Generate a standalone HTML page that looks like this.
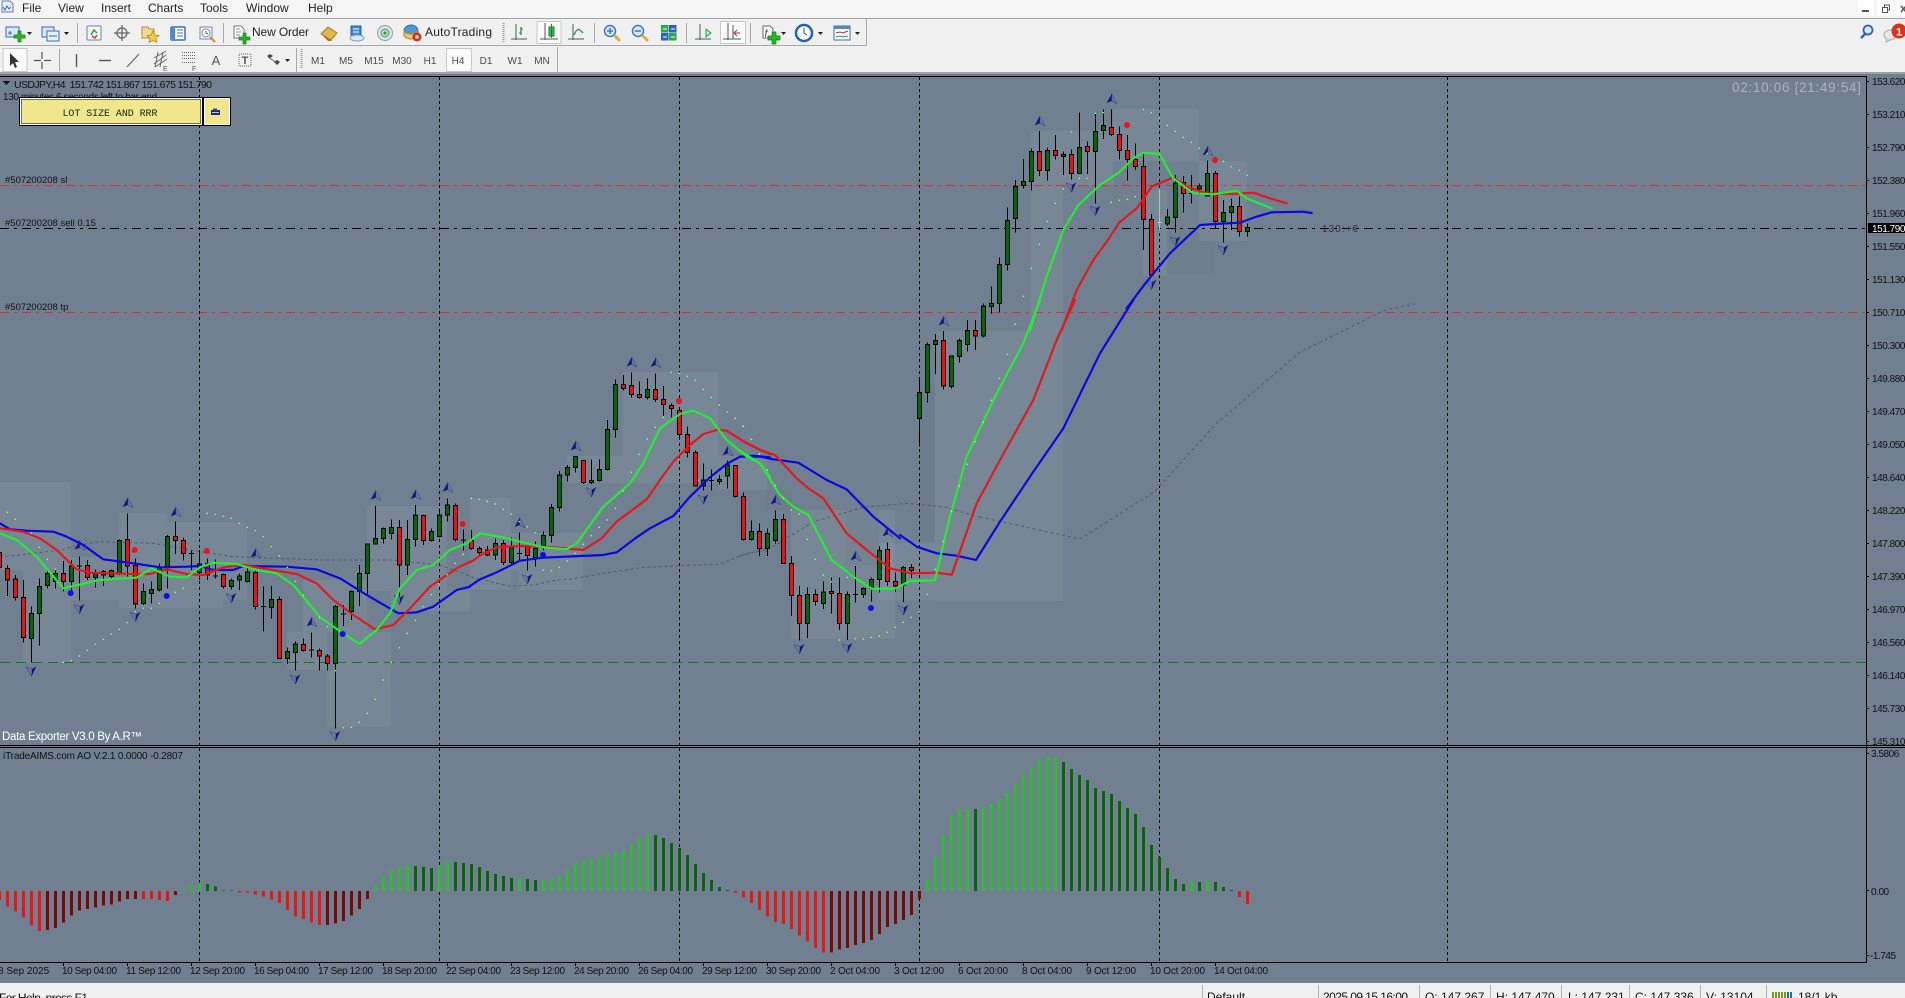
<!DOCTYPE html>
<html><head><meta charset="utf-8"><title>USDJPY,H4</title>
<style>
html,body{margin:0;padding:0;background:#708090;width:1905px;height:998px;overflow:hidden}
svg{display:block;font-family:"Liberation Sans",sans-serif}
.w{fill:none;stroke:#000;stroke-width:3}
.r{fill:#ee1111;stroke:#000;stroke-width:3}
.g{fill:#0a640a;stroke:#000;stroke-width:3}
.lb{fill:none;stroke:#0808e0;stroke-width:6.5;stroke-linejoin:round;stroke-linecap:round}
.lr{fill:none;stroke:#e4181c;stroke-width:6.5;stroke-linejoin:round;stroke-linecap:round}
.ll{fill:none;stroke:#22ee33;stroke-width:6.5;stroke-linejoin:round;stroke-linecap:round}
.ld{fill:none;stroke:#56586e;stroke-width:3;stroke-dasharray:9 8}
.dot{fill:none;stroke:#86ff86;stroke-width:5;stroke-linecap:round}
.tx{font-size:10px;fill:#111}
.px{letter-spacing:-.45px}
.tb{font-size:10px;fill:#4a4a4a;text-anchor:middle}
.mn{font-size:12px;fill:#222}
.st{font-size:12px;fill:#111}
.sep{fill:#a8a8a8}
.vd{stroke:#000;stroke-width:1;stroke-dasharray:3 3}
</style></head><body>
<svg width="1905" height="998" viewBox="0 0 1905 998" xmlns="http://www.w3.org/2000/svg">
<defs>
<g id="u"><path d="M1-17L-14 11 2 5z" fill="#14177e"/><path d="M1-17L17 13 2 5z" fill="#6d7ea0" stroke="#2a3580" stroke-width="1.5"/></g>
<g id="d"><path d="M1 17L-16-11 2-5z" fill="#6d7ea0" stroke="#2a3580" stroke-width="1.5"/><path d="M1 17L15-13 2-5z" fill="#14177e"/></g>
</defs>

<!-- top chrome -->
<rect width="1905" height="18" fill="#f5f5f5"/>
<rect y="18" width="1905" height="1" fill="#a4a4a4"/>
<rect y="19" width="1905" height="55" fill="#f0f0f0"/>
<rect y="45" width="867" height="1" fill="#a8a8a8"/>
<rect x="866" y="19" width="1" height="27" fill="#a8a8a8"/>
<rect y="72" width="1905" height="2" fill="#a0a0a0"/>

<!-- menu -->
<path d="M2 1h8l3 3v8H2z" fill="#e8eef8" stroke="#5a7fb0"/><path d="M3 7l2 3 2-4 2 3 2-2" fill="none" stroke="#3a6aa0"/>
<text class="mn" x="22" y="12">File</text><text class="mn" x="58" y="12">View</text><text class="mn" x="101" y="12">Insert</text><text class="mn" x="148" y="12">Charts</text><text class="mn" x="200" y="12">Tools</text><text class="mn" x="246" y="12">Window</text><text class="mn" x="308" y="12">Help</text>

<!-- window buttons -->
<rect x="1858" y="0" width="16" height="16" fill="#fff"/><rect x="1877" y="0" width="16" height="16" fill="#fff"/><rect x="1896" y="0" width="9" height="16" fill="#fff"/>
<rect x="1862" y="10" width="7" height="2" fill="#555"/>
<path d="M1882.500 7.500h5v5h-5zM1884.500 7.500v-2.500h5v5h-2" fill="none" stroke="#555"/>
<path d="M1901 6l5 6M1906 6l-5 6" stroke="#555" stroke-width="1.5"/>

<!-- right tools -->
<circle cx="1868" cy="30" r="4.500" fill="#dbe8fa" stroke="#2a62c0" stroke-width="1.800"/><path d="M1865 34l-4 4" stroke="#2a62c0" stroke-width="2.500"/>
<ellipse cx="1890" cy="35" rx="6" ry="5" fill="#e8e8e8" stroke="#aaa"/><path d="M1887 39l-1 3 4-2" fill="#e8e8e8" stroke="#aaa"/>
<circle cx="1899" cy="31" r="7.500" fill="#dd3018"/><text x="1899" y="35.500" text-anchor="middle" font-size="11" font-weight="bold" fill="#fff">1</text>

<!-- toolbar 1 icons -->
<rect x="6" y="27" width="13" height="10" fill="#d8e8f8" stroke="#3a6ea8"/><path d="M8 33h4M10 31v4" stroke="#3a6ea8"/>
<path d="M14 35h4v-4h3v4h4v3h-4v4h-3v-4h-4z" fill="#22b822" stroke="#1a7a1a" stroke-width=".7"/>
<path d="M27 32h5l-2.500 3z" fill="#222"/>
<rect x="42" y="27" width="12" height="10" fill="#d8e8f8" stroke="#3a6ea8"/><rect x="47" y="31" width="12" height="10" fill="#e8f0fa" stroke="#3a6ea8"/><path d="M49 36h8" stroke="#3a6ea8"/>
<path d="M64 32h5l-2.500 3z" fill="#222"/>
<rect x="77" y="23" width="1" height="20" class="sep"/>
<rect x="87" y="26" width="14" height="14" rx="1" fill="#f8f8f8" stroke="#5a84b8"/><path d="M91 35l3-5 3 3" fill="none" stroke="#2aa82a" stroke-width="1.500"/><path d="M92 36l3 2 2-3" fill="none" stroke="#d03020" stroke-width="1.500"/>
<circle cx="122" cy="33" r="5" fill="none" stroke="#666" stroke-width="1.300"/><path d="M122 25v16M114 33h16" stroke="#666" stroke-width="1.300"/>
<path d="M142 27h6l1 2h5v9h-12z" fill="#f4d98a" stroke="#b09040"/><path d="M153 31l2 4 4 .5-3 3 1 4-4-2-4 2 1-4-3-3 4-.5z" fill="#f4c840" stroke="#a88020" stroke-width=".7"/>
<rect x="171" y="27" width="14" height="13" rx="1" fill="#fff" stroke="#3a70b8" stroke-width="1.500"/><rect x="171" y="27" width="4" height="13" fill="#4a88d8"/><path d="M177 30h6M177 33h6M177 36h6" stroke="#5a6a80"/>
<rect x="200" y="27" width="12" height="12" fill="#eef2f8" stroke="#7a8ca8"/><circle cx="206" cy="33" r="4" fill="#fff" stroke="#7a8ca8"/><path d="M206 31v2l2 1" stroke="#555" fill="none"/><path d="M210 37l5 5" stroke="#c09030" stroke-width="2"/>
<rect x="223" y="23" width="1" height="20" class="sep"/>
<path d="M234 26h7l3 3v9h-10z" fill="#fff" stroke="#777"/><path d="M236 29h4M236 32h5M236 35h4" stroke="#888"/>
<path d="M239 37h4v-4h3v4h4v3h-4v4h-3v-4h-4z" fill="#22b822" stroke="#1a7a1a" stroke-width=".7"/>
<text class="mn" x="252" y="36" textLength="57">New Order</text>
<path d="M321 34l7-7 9 6-6 7z" fill="#e0b84c" stroke="#a07820"/><path d="M321 34l10 6 1 1-4 0z" fill="#a8741c"/>
<path d="M351 26h10v9h-10z" fill="#3a88d8" stroke="#2a60a8"/><path d="M353 29h6M353 32h6" stroke="#fff"/><ellipse cx="357" cy="38" rx="7" ry="3" fill="#dbe8f4" stroke="#88a0b8"/>
<circle cx="385" cy="33" r="7.500" fill="#d8e4ec" stroke="#8aa0b0"/><circle cx="385" cy="33" r="4" fill="#bdd8c0" stroke="#5aa060"/><circle cx="385" cy="33" r="1.500" fill="#2a9a3a"/>
<ellipse cx="411" cy="31" rx="7" ry="6" fill="#4a98d8" stroke="#2a70a8"/><path d="M404 31c3 4 10 4 14 0l1 5c-4 4-11 4-15 0z" fill="#e8c860" stroke="#a88830"/><circle cx="417" cy="37" r="4.500" fill="#d83018"/><rect x="415.500" y="35.500" width="3" height="3" fill="#fff"/>
<text class="mn" x="425" y="36" textLength="67">AutoTrading</text>
<path d="M503.500 23v20" stroke="#999" stroke-width="2" stroke-dasharray="1 1"/>
<g fill="none" stroke="#4a5a5a">
<path d="M516 24v16M511 39h16"/><path d="M521 27v8" stroke="#2a8a2a" stroke-width="1.300"/><path d="M519 33h2M521 29h2" stroke="#2a8a2a"/>
<rect x="537" y="21.500" width="24" height="22" fill="#fafafa" stroke="#c8c8c8"/>
<path d="M545 23v17M540 39h18"/><rect x="549" y="27" width="5" height="9" fill="#32c040" stroke="#2a7a3a"/><path d="M551.500 24v14" stroke="#2a7a3a"/>
<path d="M573 24v16M568 39h16"/><path d="M574 35c3-7 5-7 9-2" stroke="#2a8a4a" stroke-width="1.300"/>
</g>
<rect x="594" y="23" width="1" height="20" class="sep"/>
<g fill="#dbeafa" stroke="#3a78c8" stroke-width="1.500"><circle cx="610" cy="31" r="5.500"/><circle cx="638" cy="31" r="5.500"/></g>
<path d="M607 31h6M610 28v6M635 31h6" stroke="#3a78c8" stroke-width="1.500"/>
<path d="M614 35l6 6M642 35l6 6" stroke="#d8b040" stroke-width="3"/>
<rect x="661" y="25" width="7.500" height="7.500" fill="#2aa84a"/><rect x="669" y="25" width="7.500" height="7.500" fill="#2a60c0"/><rect x="661" y="33" width="7.500" height="7.500" fill="#2a60c0"/><rect x="669" y="33" width="7.500" height="7.500" fill="#2aa84a"/><path d="M663 29h4M671 29h4M663 37h4M671 37h4" stroke="#fff"/>
<rect x="686" y="23" width="1" height="20" class="sep"/>
<g fill="none" stroke="#4a5a5a"><path d="M700 24v16M695 39h16"/><path d="M706 29l5 4-5 4z" stroke="#2a9a3a" fill="#b8ecb8"/>
<rect x="720.500" y="21.500" width="25" height="22" fill="#fafafa" stroke="#c8c8c8"/>
<path d="M728 23v17M723 39h18M733 25v14"/><path d="M734 33h6M737 30l-3 3 3 3" stroke="#c03020"/></g>
<rect x="750" y="23" width="1" height="20" class="sep"/>
<path d="M763 26h7l3 3v9h-10z" fill="#fff" stroke="#666"/><text x="764.500" y="37" font-size="10" font-style="italic" fill="#333">f</text>
<path d="M768 36h4v-4h4v4h4v4h-4v4h-4v-4h-4z" fill="#22b822" stroke="#1a7a1a" stroke-width=".7"/>
<path d="M781 32h5l-2.500 3z" fill="#222"/>
<circle cx="804" cy="33" r="8" fill="#fff" stroke="#1e62b8" stroke-width="2.500"/><path d="M804 28v5l3 2" stroke="#444" fill="none"/>
<path d="M818 32h5l-2.500 3z" fill="#222"/>
<rect x="834" y="26" width="16" height="14" fill="#fff" stroke="#3a70a8"/><rect x="834" y="26" width="16" height="3" fill="#4a88c8"/><path d="M836 33l4-1 3 1 5-2" stroke="#c03020" fill="none"/><path d="M836 37l4-1 3 1 5-1" stroke="#2a9a3a" fill="none"/>
<path d="M855 32h5l-2.500 3z" fill="#222"/>

<!-- toolbar 2 -->
<rect x="3" y="48.500" width="24" height="23" fill="#fafafa" stroke="#c8c8c8"/>
<path d="M10 53v13l3-3 2 5 2-1-2-5h4z" fill="#333"/>
<path d="M42 52v7M42 62v7M34 60.500h7M44 60.500h7" stroke="#555" stroke-width="1.200"/>
<rect x="59" y="49" width="1" height="22" class="sep"/>
<path d="M76.500 54v13" stroke="#555" stroke-width="1.400"/>
<path d="M99 60.500h12" stroke="#555" stroke-width="1.400"/>
<path d="M127 67l12-13" stroke="#666" stroke-width="1.200"/>
<path d="M154 64l12-9M154 58l12-7M155 67l12-8M158 52l-3 15M163 52l-3 15" stroke="#666" fill="none"/><text x="163" y="71" font-size="7" fill="#555">E</text>
<path d="M182 52.500h13M182 55.500h13M182 58.500h13M182 62.500h13" stroke="#666" stroke-dasharray="1 1"/><text x="192" y="71" font-size="7" fill="#555">F</text>
<text x="216" y="65" font-size="13" fill="#555" text-anchor="middle">A</text>
<rect x="239" y="54" width="12" height="12" fill="none" stroke="#666" stroke-dasharray="1 1"/><text x="245" y="64" font-size="11" fill="#555" text-anchor="middle" font-weight="bold">T</text>
<path d="M267 56l3-2 3 2-3 2z" fill="#444"/><path d="M274 62l3-2 3 2-3 3z" fill="#444"/><path d="M268 57l9 6" stroke="#666"/>
<path d="M285 59h5l-2.500 3z" fill="#222"/>
<rect x="296" y="48" width="1" height="24" class="sep"/>
<path d="M301.500 49v20" stroke="#999" stroke-width="2" stroke-dasharray="1 1"/>
<rect x="446.500" y="48.500" width="25" height="23" fill="#fafafa" stroke="#c8c8c8"/>
<text class="tb" x="318" y="64">M1</text><text class="tb" x="346" y="64">M5</text><text class="tb" x="374" y="64">M15</text><text class="tb" x="402" y="64">M30</text><text class="tb" x="430" y="64">H1</text><text class="tb" x="458" y="64">H4</text><text class="tb" x="486" y="64">D1</text><text class="tb" x="515" y="64">W1</text><text class="tb" x="542" y="64">MN</text>
<rect x="557" y="47" width="1" height="25" class="sep"/>

<!-- chart bg -->
<rect y="74" width="1905" height="909" fill="#708090"/>

<!-- shaded boxes -->
<g fill="#fff" fill-opacity=".055">
<rect x="0" y="482" width="71" height="88"/><rect x="23" y="570" width="48" height="93"/>
<rect x="71" y="557" width="48" height="43"/><rect x="119" y="513" width="48" height="95"/>
<rect x="167" y="522" width="56" height="86"/><rect x="223" y="522" width="24" height="78"/>
<rect x="287" y="632" width="40" height="38"/><rect x="335" y="632" width="56" height="38"/><rect x="327" y="670" width="64" height="57"/>
<rect x="303" y="580" width="64" height="52"/>
<rect x="367" y="506" width="80" height="85"/><rect x="391" y="591" width="79" height="20"/>
<rect x="470" y="498" width="41" height="92"/><rect x="511" y="533" width="72" height="37"/><rect x="519" y="570" width="64" height="20"/>
<rect x="567" y="456" width="56" height="27"/><rect x="623" y="372" width="95" height="111"/><rect x="718" y="456" width="49" height="34"/>
<rect x="791" y="510" width="104" height="129"/><rect x="879" y="543" width="56" height="57"/>
<rect x="935" y="331" width="128" height="270"/><rect x="1031" y="131" width="32" height="200"/>
<rect x="1063" y="131" width="50" height="54"/><rect x="1113" y="109" width="86" height="52"/><rect x="1143" y="190" width="24" height="86"/>
<rect x="1199" y="161" width="48" height="80"/>
</g>
<g fill="#000" fill-opacity=".025">
<rect x="919" y="385" width="16" height="156"/><rect x="846" y="510" width="33" height="55"/><rect x="767" y="490" width="24" height="20"/>
</g>
<rect x="1167" y="233" width="48" height="40" fill="#000" fill-opacity=".012"/>

<!-- horizontal lines -->
<path d="M0 185.500H1866" stroke="#d8303a" stroke-dasharray="9 5 3 5"/>
<path d="M0 312.500H1866" stroke="#d8303a" stroke-dasharray="9 5 3 5"/>
<path d="M0 228.500H1866" stroke="#000" stroke-dasharray="9 5 3 5"/>
<path d="M0 662.500H1866" stroke="#0b7a2a" stroke-dasharray="10 6"/>

<!-- vertical dashed -->
<path class="vd" d="M199.500 77V745M439.500 77V745M679.500 77V745M919.500 77V745M1159.500 77V745M1447.500 77V745M199.500 748V962M439.500 748V962M679.500 748V962M919.500 748V962M1159.500 748V962M1447.500 748V962"/>

<!-- grey dotted curve -->
<g transform="translate(0 480) scale(.33333)"><path class="ld" d="M0 230L60 225 180 210 240 195 300 185 460 190 600 215 700 230 960 240 1180 240 1320 255 1440 300"/></g>
<g transform="translate(470 340) scale(.33333)"><path class="ld" d="M30 715L70 728 120 738 190 735 260 720 300 718 400 700 520 682 750 672 830 640 900 630"/></g>
<g transform="translate(740 400) scale(.33333)"><path class="ld" d="M0 468L100 440 220 365 370 322 500 310 620 322 720 352"/></g>
<path d="M980 517L1080 539 1154 492 1215 425 1300 352 1385 310 1415 304" fill="none" stroke="#56586e" stroke-dasharray="3 3"/>

<!-- candles -->
<g shape-rendering="crispEdges">
<g transform="translate(.17 480) scale(.33333)">
<path class="w" d="M-2 210V270M22 255V348M46 285V362M70 300V488M94 380V548M118 295V497M142 268V326M166 270V325M190 243V335M214 240V330M238 230V362M230 258h16M262 240V300M286 268V322M310 270V318M334 268V300M358 178V285M382 100V290M406 236V385M430 310V375M454 305V370M478 250V335M502 165V325M526 125V222M550 172V242M574 212V270M566 220h16M598 210V300M622 235V300M646 238V295M638 288h16M670 280V325M694 295V328M718 280V330M742 255V308M766 270V388M790 320V455M782 380h16M814 318V415M838 350V537M862 502V552M886 484V572M910 475V515M934 457V532M926 510h16M958 505V572M982 522V572M1006 375V745M1030 375V438M1022 402h16M1054 332V420M1078 255V378M1102 190V342M1126 78V194M1150 142V190M1174 118V178M1198 120V350M1222 120V285M1246 75V200M1270 103V195M1294 145V185M1318 85V172M1342 55V125M1366 70V185M1390 148V212M1382 180h16M1414 150V210M1438 200V225"/>
<path class="r" d="M-8 218h12V262h-12zM16 265h12V300h-12zM40 297h12V352h-12zM64 352h12V472h-12zM184 281h12V305h-12zM256 257h12V292h-12zM376 178h12V258h-12zM400 256h12V372h-12zM520 170h12V182h-12zM544 182h12V220h-12zM616 250h12V285h-12zM664 283h12V320h-12zM760 277h12V380h-12zM832 358h12V535h-12zM904 494h12V512h-12zM952 512h12V528h-12zM976 528h12V550h-12zM1192 142h12V255h-12zM1264 107h12V182h-12zM1360 77h12V178h-12zM1408 182h12V205h-12zM1432 205h12V218h-12z"/>
<path class="g" d="M88 400h12V475h-12zM112 320h12V400h-12zM136 280h12V316h-12zM160 280h12V305h-12zM208 258h12V305h-12zM280 280h12V292h-12zM304 275h12V285h-12zM328 272h12V290h-12zM352 182h12V280h-12zM424 335h12V370h-12zM448 328h12V340h-12zM472 262h12V330h-12zM496 170h12V262h-12zM592 252h12V277h-12zM688 302h12V320h-12zM712 288h12V300h-12zM736 276h12V305h-12zM808 358h12V382h-12zM856 515h12V535h-12zM880 492h12V517h-12zM1000 380h12V550h-12zM1048 335h12V395h-12zM1072 280h12V335h-12zM1096 192h12V280h-12zM1120 175h12V192h-12zM1144 145h12V175h-12zM1168 142h12V160h-12zM1216 178h12V255h-12zM1240 105h12V178h-12zM1288 155h12V182h-12zM1312 105h12V170h-12zM1336 75h12V105h-12z"/>
</g>
<g transform="translate(470.17 340) scale(.33333)">
<path class="w" d="M52 618V648M76 595V660M100 600V675M124 592V670M148 578V660M140 640h16M172 615V692M196 605V680M220 575V632M244 492V608M268 393V515M292 375V425M316 348V398M340 360V432M364 358V432M388 358V424M412 240V392M436 118V293M460 105V152M484 97V172M508 124V176M532 115V178M556 100V186M580 138V228M604 190V232M628 205V300M652 260V352M676 332V440M700 370V452M724 388V452M716 422h16M748 405V434M772 362V445M796 375V472M820 458V602M844 542V602M868 550V648M892 565V648"/>
<path class="r" d="M46 630h12V645h-12zM94 610h12V668h-12zM166 620h12V647h-12zM334 362h12V428h-12zM454 133h12V146h-12zM478 137h12V163h-12zM502 163h12V173h-12zM550 148h12V178h-12zM574 178h12V193h-12zM598 196h12V205h-12zM622 212h12V284h-12zM646 284h12V337h-12zM670 337h12V438h-12zM790 376h12V470h-12zM814 470h12V598h-12zM862 575h12V625h-12z"/>
<path class="g" d="M70 610h12V645h-12zM118 622h12V668h-12zM190 625h12V652h-12zM214 587h12V620h-12zM238 502h12V587h-12zM262 405h12V503h-12zM286 382h12V405h-12zM310 350h12V382h-12zM358 422h12V428h-12zM382 388h12V422h-12zM406 268h12V388h-12zM430 133h12V268h-12zM526 148h12V173h-12zM694 420h12V438h-12zM742 418h12V424h-12zM766 375h12V408h-12zM838 575h12V598h-12zM886 580h12V625h-12z"/>
</g>
<g transform="translate(740.17 400) scale(.33333)">
<path class="w" d="M106 332V430M130 342V490M154 468V648M178 558V722M202 562V714M226 568V617M250 545V627M274 532V640M298 532V690M322 575V720M346 498V608M338 583h16M370 562V594M394 532V604M418 438V578M442 427V558M466 518V576M490 498V606M514 492V534"/>
<path class="r" d="M124 358h12V490h-12zM148 490h12V586h-12zM172 586h12V670h-12zM220 583h12V605h-12zM268 574h12V580h-12zM292 580h12V670h-12zM436 449h12V544h-12zM460 544h12V558h-12zM508 502h12V512h-12z"/>
<path class="g" d="M100 358h12V422h-12zM196 583h12V670h-12zM244 576h12V610h-12zM316 583h12V670h-12zM364 566h12V583h-12zM388 538h12V566h-12zM412 451h12V538h-12zM484 503h12V555h-12z"/>
</g>
<g transform="translate(900.17 300) scale(.33333)">
<path class="w" d="M58 240V440M82 128V308M106 102V222M130 93V268M154 166V265M178 115V188M202 60V155M226 60V150M250 10V112"/>
<path class="r" d="M124 122h12V258h-12zM220 92h12V108h-12z"/>
<path class="g" d="M52 277h12V355h-12zM76 133h12V277h-12zM100 121h12V133h-12zM148 168h12V260h-12zM172 122h12V170h-12zM196 92h12V133h-12zM244 18h12V108h-12z"/>
</g>
<g transform="translate(980.17 90) scale(.33333)">
<path class="w" d="M34 590V670M58 502V668M82 352V542M106 270V428M130 207V296M154 175V302M178 123V258M202 172V272M226 135V208M250 185V255M274 178V268M298 68V252M322 155V252M346 70V340"/>
<path class="r" d="M172 184h12V242h-12zM220 181h12V197h-12zM268 193h12V250h-12zM316 170h12V185h-12z"/>
<path class="g" d="M28 640h12V650h-12zM52 523h12V640h-12zM76 391h12V523h-12zM100 290h12V385h-12zM124 275h12V287h-12zM148 184h12V275h-12zM196 181h12V242h-12zM244 193h12V200h-12zM292 172h12V250h-12zM340 124h12V185h-12z"/>
</g>
<g transform="translate(1100.17 90) scale(.33333)">
<path class="w" d="M10 58V147M34 58V138M58 110V208M82 135V272M106 160V240M130 192V480M154 372V558M202 357V408M226 255V428M250 258V368M274 255V340M266 310h16M298 280V315M322 212V320M346 243V415M370 330V457M394 325V420M418 320V440M442 400V440"/>
<path d="M178 295V420M170 397h16" fill="none" stroke="#b4bcc6" stroke-width="3"/>
<path class="r" d="M28 112h12V134h-12zM52 133h12V182h-12zM76 181h12V208h-12zM100 208h12V230h-12zM124 229h12V389h-12zM148 388h12V555h-12zM244 278h12V311h-12zM340 250h12V395h-12zM412 349h12V425h-12z"/>
<path class="g" d="M4 106h12V122h-12zM196 381h12V402h-12zM220 279h12V383h-12zM292 288h12V297h-12zM316 250h12V318h-12zM364 367h12V395h-12zM388 349h12V368h-12zM436 412h12V425h-12z"/>
</g>
</g>

<!-- arrows -->
<g transform="translate(0 480) scale(.33333)">
<use href="#u" x="382" y="70"/><use href="#u" x="526" y="98"/><use href="#u" x="238" y="198"/><use href="#u" x="766" y="222"/><use href="#u" x="934" y="428"/><use href="#u" x="1126" y="48"/><use href="#u" x="1246" y="46"/><use href="#u" x="1342" y="24"/>
<use href="#d" x="94" y="572"/><use href="#d" x="238" y="385"/><use href="#d" x="406" y="408"/><use href="#d" x="694" y="352"/><use href="#d" x="886" y="596"/><use href="#d" x="1006" y="766"/><use href="#d" x="1198" y="358"/>
</g>
<g transform="translate(470 340) scale(.33333)">
<use href="#u" x="148" y="550"/><use href="#u" x="316" y="320"/><use href="#u" x="484" y="68"/><use href="#u" x="556" y="70"/><use href="#u" x="772" y="335"/>
<use href="#d" x="172" y="715"/><use href="#d" x="364" y="454"/><use href="#d" x="700" y="476"/>
</g>
<g transform="translate(740 400) scale(.33333)">
<use href="#u" x="106" y="302"/><use href="#u" x="346" y="470"/><use href="#u" x="442" y="398"/>
<use href="#d" x="178" y="745"/><use href="#d" x="322" y="742"/><use href="#d" x="490" y="628"/>
</g>
<g transform="translate(900 300) scale(.33333)"><use href="#u" x="130" y="65"/></g>
<g transform="translate(980 90) scale(.33333)"><use href="#u" x="178" y="95"/><use href="#u" x="394" y="28"/><use href="#d" x="274" y="290"/><use href="#d" x="346" y="360"/></g>
<g transform="translate(1100 90) scale(.33333)"><use href="#u" x="322" y="185"/><use href="#d" x="154" y="582"/><use href="#d" x="226" y="452"/><use href="#d" x="370" y="478"/></g>

<!-- MA lines: blue -->
<g transform="translate(0 480) scale(.33333)"><path class="lb" d="M0 130L30 148 80 152 160 155 200 170 250 195 310 238 400 250 480 262 560 260 600 258 640 270 700 270 730 258 860 260 950 268 1020 295 1100 345 1195 400 1250 397 1300 380 1370 330 1410 320"/></g>
<g transform="translate(470 340) scale(.33333)"><path class="lb" d="M0 738L30 718 80 697 150 662 220 653 330 648 400 645 440 637 500 592 540 565 610 528 660 470 720 412 770 372 810 350 850 347 900 352"/></g>
<g transform="translate(740 400) scale(.33333)"><path class="lb" d="M0 170L60 170 100 178 175 188 260 240 320 268 400 350 480 415"/></g>
<g transform="translate(900 300) scale(.33333)"><path class="lb" d="M0 705L50 740 110 760 170 767 228 780 300 665 400 515 490 385 600 160 700 0"/></g>
<g transform="translate(1100 90) scale(.33333)"><path class="lb" d="M80 655L140 575 210 490 300 405 345 402 420 398 470 380 515 367 610 365 635 369"/></g>
<!-- red -->
<g transform="translate(0 480) scale(.33333)"><path class="lr" d="M0 145L70 155 120 175 170 210 230 268 270 278 400 282 450 282 500 268 560 282 610 285 670 262 730 255 830 272 890 282 950 310 1000 360 1060 405 1125 448 1180 435 1230 385 1290 320 1370 265 1410 245"/></g>
<g transform="translate(470 340) scale(.33333)"><path class="lr" d="M0 668L40 640 80 622 150 618 250 622 340 630 395 595 440 545 530 478 570 420 610 365 660 315 700 282 740 270 770 272 830 310 900 343"/></g>
<g transform="translate(740 400) scale(.33333)"><path class="lr" d="M0 118L60 150 105 165 170 235 205 265 250 295 320 400 380 450 450 505 510 520 590 518 635 524"/></g>
<g transform="translate(900 300) scale(.33333)"><path class="lr" d="M155 825L230 610 300 480 400 300 470 120 525 0"/></g>
<g transform="translate(980 90) scale(.33333)"><path class="lr" d="M245 720L290 600 340 510 380 455 420 395"/></g>
<g transform="translate(1100 90) scale(.33333)"><path class="lr" d="M55 400L110 355 155 290 220 262 260 290 320 310 400 312 460 308 510 325 560 340"/></g>
<!-- lime -->
<g transform="translate(0 480) scale(.33333)"><path class="ll" d="M0 160L50 180 110 230 190 325 300 300 410 293 455 265 510 290 560 292 600 262 640 248 710 252 770 270 830 280 880 315 930 375 960 412 1015 450 1078 492 1130 450 1170 400 1200 325 1250 270 1300 255 1350 210 1400 190 1440 160"/></g>
<g transform="translate(470 340) scale(.33333)"><path class="ll" d="M30 580L90 590 150 605 220 622 290 628 320 610 400 500 480 430 520 370 570 265 630 222 670 212 720 235 770 300 830 350 870 370 900 410"/></g>
<g transform="translate(740 400) scale(.33333)"><path class="ll" d="M0 152L60 190 120 285 160 320 205 345 275 480 340 530 395 566 465 566 510 543 585 541"/></g>
<g transform="translate(900 300) scale(.33333)"><path class="ll" d="M105 840L150 650 200 470 280 300 370 130 420 0"/></g>
<g transform="translate(980 90) scale(.33333)"><path class="ll" d="M150 720L200 560 250 420 295 345 360 285 420 245"/></g>
<g transform="translate(1100 90) scale(.33333)"><path class="ll" d="M60 245L100 205 130 188 178 192 220 265 280 310 340 313 410 302 440 325 515 355"/></g>

<!-- psar dots -->
<g transform="translate(0 480) scale(.33333)"><path class="dot" d="M22 97h.1M46 118h.1M94 160h.1M118 202h.1M142 238h.1M166 268h.1M190 547h.1M214 542h.1M238 528h.1M262 511h.1M286 493h.1M310 478h.1M334 462h.1M358 448h.1M382 428h.1M406 395h.1M430 385h.1M454 385h.1M478 370h.1M502 350h.1M526 337h.1M550 325h.1M622 100h.1M646 103h.1M670 109h.1M694 115h.1M718 130h.1M742 142h.1M766 152h.1M790 170h.1M814 200h.1M838 227h.1M862 262h.1M886 304h.1M910 346h.1M958 412h.1M982 440h.1M1006 572h.1M1030 743h.1M1054 742h.1M1078 727h.1M1102 700h.1M1126 658h.1M1150 600h.1M1174 547h.1M1198 503h.1M1222 460h.1M1246 421h.1M1270 380h.1M1294 344h.1M1318 312h.1M1342 284h.1M1366 250h.1M1390 223h.1M1414 55h.1"/></g>
<g transform="translate(470 340) scale(.33333)"><path class="dot" d="M4 475h.1M28 478h.1M52 484h.1M76 492h.1M100 508h.1M124 522h.1M148 545h.1M172 560h.1M196 578h.1M220 690h.1M244 692h.1M268 682h.1M292 663h.1M316 640h.1M340 613h.1M364 587h.1M388 562h.1M412 540h.1M436 505h.1M460 453h.1M484 397h.1M508 343h.1M532 297h.1M556 262h.1M580 232h.1M604 97h.1M628 100h.1M652 109h.1M676 121h.1M700 148h.1M724 172h.1M748 195h.1M772 216h.1M796 235h.1M820 259h.1M844 298h.1M868 342h.1"/></g>
<g transform="translate(740 400) scale(.33333)"><path class="dot" d="M10 78h.1M34 118h.1M58 162h.1M82 210h.1M106 256h.1M130 295h.1M154 330h.1M178 342h.1M202 418h.1M226 478h.1M250 525h.1M274 545h.1M298 720h.1M322 532h.1M346 716h.1M370 717h.1M394 712h.1M418 708h.1M442 697h.1M466 682h.1M490 667h.1M514 652h.1M538 636h.1"/></g>
<g transform="translate(900 300) scale(.33333)"><path class="dot" d="M82 883h.1M106 808h.1M130 724h.1M154 634h.1M178 558h.1M202 493h.1M226 425h.1M250 367h.1M274 301h.1M298 235h.1M322 163h.1M346 73h.1"/></g>
<g transform="translate(980 90) scale(.33333)"><path class="dot" d="M106 703h.1M130 619h.1M154 535h.1M178 463h.1M202 394h.1M226 340h.1M250 297h.1M274 125h.1M298 265h.1M322 265h.1M346 70h.1M370 68h.1M394 337h.1M418 331h.1"/></g>
<g transform="translate(1100 90) scale(.33333)"><path class="dot" d="M82 328h.1M106 320h.1M130 58h.1M154 68h.1M178 86h.1M202 106h.1M226 124h.1M250 142h.1M274 157h.1M298 175h.1M322 190h.1M346 205h.1M370 214h.1M394 230h.1M418 241h.1M442 256h.1"/></g>

<!-- red / blue dots -->
<g fill="#f01020">
<circle cx="134.700" cy="550" r="3"/><circle cx="206.700" cy="551" r="3"/><circle cx="462.700" cy="524" r="3"/><circle cx="679" cy="401" r="3"/><circle cx="1127" cy="125" r="3"/><circle cx="1215" cy="160" r="3"/>
</g>
<g fill="#0a10e8">
<circle cx="70.700" cy="593" r="3"/><circle cx="166.700" cy="596" r="3"/><circle cx="342.700" cy="634" r="3"/><circle cx="543" cy="555" r="3"/><circle cx="871" cy="608" r="3"/>
</g>

<!-- separators & frame -->
<rect y="76" width="1867" height="1" fill="#000"/>
<rect y="745" width="1905" height="1" fill="#000"/><rect y="747" width="1905" height="1" fill="#000"/>
<rect x="1866" y="76" width="1" height="887" fill="#000"/>
<rect y="962" width="1867" height="1" fill="#000"/>
<path d="M1866 81.500h3M1866 114.500h3M1866 147.500h3M1866 180.500h3M1866 213.500h3M1866 246.500h3M1866 279.500h3M1866 312.500h3M1866 345.500h3M1866 378.500h3M1866 411.500h3M1866 444.500h3M1866 477.500h3M1866 510.500h3M1866 543.500h3M1866 576.500h3M1866 609.500h3M1866 642.500h3M1866 675.500h3M1866 708.500h3M1866 741.500h3M1866 753.500h3M1866 890.500h3M1866 955.500h3" stroke="#000"/>
<path d="M63.500 962v4M127.500 962v4M191.500 962v4M255.500 962v4M319.500 962v4M383.500 962v4M447.500 962v4M511.500 962v4M575.500 962v4M639.500 962v4M703.500 962v4M767.500 962v4M831.500 962v4M895.500 962v4M959.500 962v4M1023.500 962v4M1087.500 962v4M1151.500 962v4M1215.500 962v4" stroke="#000"/>

<!-- price scale -->
<g class="tx px">
<text x="1872" y="85">153.620</text><text x="1872" y="118">153.210</text><text x="1872" y="151">152.790</text><text x="1872" y="184">152.380</text><text x="1872" y="217">151.960</text><text x="1872" y="250">151.550</text><text x="1872" y="283">151.130</text><text x="1872" y="316">150.710</text><text x="1872" y="349">150.300</text><text x="1872" y="382">149.880</text><text x="1872" y="415">149.470</text><text x="1872" y="448">149.050</text><text x="1872" y="481">148.640</text><text x="1872" y="514">148.220</text><text x="1872" y="547">147.800</text><text x="1872" y="580">147.390</text><text x="1872" y="613">146.970</text><text x="1872" y="646">146.560</text><text x="1872" y="679">146.140</text><text x="1872" y="712">145.730</text><text x="1872" y="745">145.310</text>
<text x="1871" y="757">3.5806</text><text x="1871" y="895">0.00</text><text x="1870" y="959">-1.745</text>
</g>
<rect x="1868" y="223" width="37" height="10" fill="#000"/><text class="px" x="1872" y="232" font-size="10" fill="#fff">151.790</text>

<!-- time axis -->
<g class="tx">
<text x="-2" y="974">8 Sep 2025</text><text x="62" y="974" textLength="55">10 Sep 04:00</text><text x="126" y="974" textLength="55">11 Sep 12:00</text><text x="190" y="974" textLength="55">12 Sep 20:00</text><text x="254" y="974" textLength="55">16 Sep 04:00</text><text x="318" y="974" textLength="55">17 Sep 12:00</text><text x="382" y="974" textLength="55">18 Sep 20:00</text><text x="446" y="974" textLength="55">22 Sep 04:00</text><text x="510" y="974" textLength="55">23 Sep 12:00</text><text x="574" y="974" textLength="55">24 Sep 20:00</text><text x="638" y="974" textLength="55">26 Sep 04:00</text><text x="702" y="974" textLength="55">29 Sep 12:00</text><text x="766" y="974" textLength="55">30 Sep 20:00</text><text x="830" y="974" textLength="50">2 Oct 04:00</text><text x="894" y="974" textLength="50">3 Oct 12:00</text><text x="958" y="974" textLength="50">6 Oct 20:00</text><text x="1022" y="974" textLength="50">8 Oct 04:00</text><text x="1086" y="974" textLength="50">9 Oct 12:00</text><text x="1150" y="974" textLength="55">10 Oct 20:00</text><text x="1214" y="974" textLength="54">14 Oct 04:00</text>
</g>

<!-- AO histogram -->
<g shape-rendering="crispEdges" fill="none" stroke-width="3">
<g transform="translate(0 860) scale(1 .33333)">
<path stroke="#ee1212" d="M7.500 93V140M15.500 93V155M23.500 93V173M31.500 93V197M39.500 93V213M143.500 93V117M151.500 93V117M159.500 93V120M167.500 93V123M239.500 93V98M247.500 93V98M255.500 93V104M263.500 93V110M271.500 93V118M279.500 93V129M287.500 93V150M295.500 93V170M303.500 93V177M311.500 93V188M319.500 93V195M-.5 93V120"/>
<path stroke="#7a0808" d="M47.500 93V210M55.500 93V204M63.500 93V188M71.500 93V167M79.500 93V152M87.500 93V147M95.500 93V143M103.500 93V137M111.500 93V134M119.500 93V125M127.500 93V117M135.500 93V117M175.500 93V105M327.500 93V195M335.500 93V191M343.500 93V183M351.500 93V167M359.500 93V147M367.500 93V117"/>
<path stroke="#2fbe2f" d="M183.500 93V87M191.500 93V78M199.500 93V68M375.500 93V75M383.500 93V51M391.500 93V30M399.500 93V22M407.500 93V15M439.500 93V15M447.500 93V6M519.500 93V54M543.500 93V60M551.500 93V57M559.500 93V48M567.500 93V30M575.500 93V9M583.500 93V3M591.500 93V-3M599.500 93V-9M607.500 93V-15M615.500 93V-24"/>
<path stroke="#0a640a" d="M207.500 93V72M215.500 93V80M223.500 93V91M231.500 93V92M415.500 93V18M423.500 93V21M431.500 93V24M455.500 93V6M463.500 93V9M471.500 93V12M479.500 93V21M487.500 93V33M495.500 93V42M503.500 93V48M511.500 93V54M527.500 93V57M535.500 93V60"/>
</g>
<g transform="translate(0 740) scale(1 .33333)">
<path stroke="#2fbe2f" d="M623.500 453V330M631.500 453V312M639.500 453V294M647.500 453V282M927.500 453V417M935.500 453V351M943.500 453V285M951.500 453V225M959.500 453V210M967.500 453V207M983.500 453V201M991.500 453V190M999.500 453V177M1007.500 453V159M1015.500 453V132M1023.500 453V105M1031.500 453V81M1039.500 453V60M1047.500 453V51M1055.500 453V51M1191.500 453V423M1207.500 453V420"/>
<path stroke="#0a640a" d="M655.500 453V285M663.500 453V294M671.500 453V309M679.500 453V324M687.500 453V345M695.500 453V372M703.500 453V399M711.500 453V420M719.500 453V441M727.500 453V450M975.500 453V207M1063.500 453V66M1071.500 453V87M1079.500 453V105M1087.500 453V120M1095.500 453V144M1103.500 453V153M1111.500 453V162M1119.500 453V183M1127.500 453V204M1135.500 453V222M1143.500 453V261M1151.500 453V315M1159.500 453V351M1167.500 453V384M1175.500 453V417M1183.500 453V432M1199.500 453V426M1215.500 453V426M1223.500 453V441M1231.500 453V450"/>
<path stroke="#ee1212" d="M735.500 453V459M743.500 453V473M751.500 453V489M759.500 453V510M767.500 453V530M775.500 453V546M783.500 453V552M791.500 453V567M799.500 453V587M807.500 453V605M815.500 453V624M823.500 453V638M1239.500 453V471M1247.500 453V492"/>
<path stroke="#7a0808" d="M831.500 453V638M839.500 453V629M847.500 453V624M855.500 453V615M863.500 453V609M871.500 453V600M879.500 453V582M887.500 453V561M895.500 453V552M903.500 453V540M911.500 453V525M919.500 453V477"/>
</g>
</g>

<!-- chart text -->
<path d="M3 81h7l-3.500 4z" fill="#000"/>
<text x="14" y="88" font-size="10.500" fill="#111" textLength="198" xml:space="preserve">USDJPY,H4  151.742 151.867 151.675 151.790</text>
<text x="3" y="100" font-size="10" fill="#111" textLength="154">130 minutes 6 seconds left to bar end</text>
<text x="5" y="183" font-size="9.500" fill="#111">#507200208 sl</text>
<text x="5" y="226" font-size="9.500" fill="#111">#507200208 sell 0.15</text>
<text x="5" y="310" font-size="9.500" fill="#111">#507200208 tp</text>
<text x="1322" y="232" font-size="10" fill="#333" letter-spacing="1">130:+€</text>
<text x="1732" y="92" font-size="13.500" fill="#aab4be" textLength="129">02:10:06 [21:49:54]</text>
<text x="2" y="740" font-size="11.500" fill="#fff" textLength="140">Data Exporter V3.0 By A.R™</text>
<text x="3" y="759" font-size="10" fill="#111" textLength="180">iTradeAIMS.com AO V.2.1 0.0000 -0.2807</text>

<!-- button -->
<rect x="19.500" y="97.500" width="183" height="28" fill="#f0e68c" stroke="#000"/><rect x="20.500" y="98.500" width="181" height="26" fill="none" stroke="#fff"/><rect x="21.500" y="99.500" width="179" height="24" fill="none" stroke="#000" stroke-opacity=".5"/>
<rect x="203.500" y="97.500" width="27" height="28" fill="#f0e68c" stroke="#000"/><rect x="204.500" y="98.500" width="25" height="26" fill="none" stroke="#fff"/>
<text x="62.500" y="116" font-family="Liberation Mono" font-size="10" fill="#222" textLength="95">LOT SIZE AND RRR</text>
<rect x="211" y="110" width="9" height="5" fill="#1a2a7a"/><rect x="213" y="108.500" width="4" height="2" fill="#3a4a9a"/><rect x="212" y="112" width="7" height="1" fill="#c8c8e8"/>

<!-- status bar -->
<rect y="983" width="1905" height="15" fill="#f0f0f0"/>
<g class="st">
<text x="-1" y="1002" textLength="89">For Help, press F1</text>
<text x="1207" y="1001">Default</text>
<text x="1323" y="1001" textLength="85">2025.09.15 16:00</text>
<text x="1425" y="1001">O: 147.267</text>
<text x="1496" y="1001">H: 147.470</text>
<text x="1568" y="1001">L: 147.231</text>
<text x="1635" y="1001">C: 147.336</text>
<text x="1706" y="1001">V: 13104</text>
<text x="1798" y="1001">18/1 kb</text>
</g>
<path d="M1202.500 985v13M1318.500 985v13M1419.500 985v13M1490.500 985v13M1561.500 985v13M1629.500 985v13M1700.500 985v13M1766.500 985v13" stroke="#b4b4b4"/>
<path d="M1772 992h2v6h-2zM1775 992h2v6h-2zM1778 992h2v6h-2zM1781 992h2v6h-2zM1784 992h2v6h-2z" fill="#7a9a20"/>
<path d="M1787 992h2v6h-2zM1790 992h2v6h-2z" fill="#2a6aa0"/>
</svg>
</body></html>
